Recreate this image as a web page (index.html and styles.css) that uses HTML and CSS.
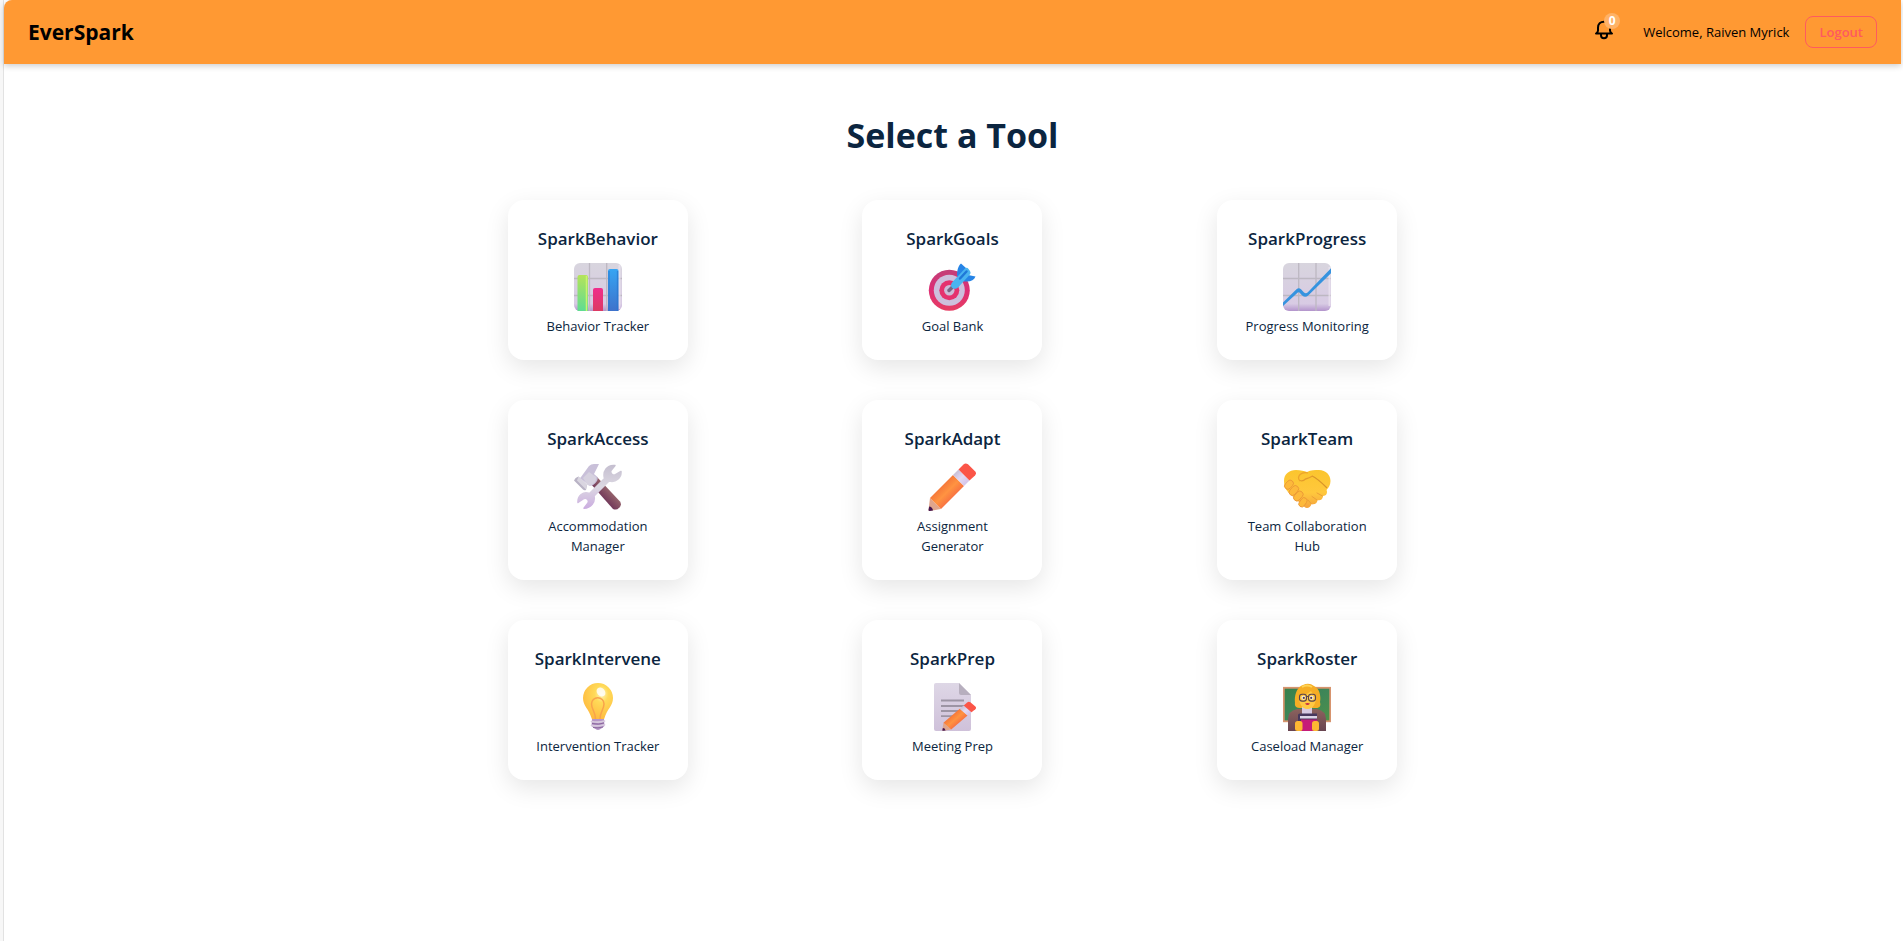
FILE: index.html
```
<!DOCTYPE html>
<html lang="en">
<head>
  <meta charset="UTF-8">
  <meta name="viewport" content="width=device-width, initial-scale=1.0">
  <title>EverSpark</title>
  <link rel="stylesheet" href="styles.css">
</head>
<body>
  <div class="page">
    <header class="navbar">
      <div class="logo">EverSpark</div>
      <div class="nav-right">
        <button class="bell" type="button" aria-label="Notifications">
          <svg viewBox="0 0 24 24" fill="none" stroke="currentColor" stroke-width="2" stroke-linecap="round" stroke-linejoin="round">
            <path d="M4 16.500h16M4.500 16.300Q6 15 6 13.500V10.700C6 7 8.500 4.700 12 4.700s6 2.300 6 6V13.500Q18 15 19.500 16.300M9 17v1.300a3 3 0 0 0 6 0V17"/>
          </svg>
          <span class="badge">0</span>
        </button>
        <span class="welcome">Welcome, Raiven Myrick</span>
        <button class="logout" type="button">Logout</button>
      </div>
    </header>

    <main class="content">
      <h1>Select a Tool</h1>
      <div class="tool-grid">

        <a class="card" href="#behavior">
          <h2>SparkBehavior</h2>
          <svg class="icon" viewBox="0 0 48 48">
            <defs>
              <linearGradient id="paper" x1="0" y1="0" x2="0" y2="1"><stop offset="0" stop-color="#d8d5de"/><stop offset=".85" stop-color="#d8cbe4"/><stop offset="1" stop-color="#b394cc"/></linearGradient>
              <linearGradient id="green" x1="0" y1="0" x2="0" y2="1"><stop offset="0" stop-color="#b4e35a"/><stop offset="1" stop-color="#5fdc92"/></linearGradient>
              <linearGradient id="pink" x1="0" y1="0" x2="0" y2="1"><stop offset="0" stop-color="#ef2d8c"/><stop offset="1" stop-color="#dc3a62"/></linearGradient>
              <linearGradient id="blue" x1="0" y1="0" x2="0" y2="1"><stop offset="0" stop-color="#36a5f3"/><stop offset="1" stop-color="#3f72cb"/></linearGradient>
            </defs>
            <rect width="48" height="48" rx="6" fill="url(#paper)"/>
            <path d="M15.500 0v48M32.700 0v48M0 15.500h48M0 32.500h48" stroke="#bdb8c2" stroke-width="1.300"/>
            <path d="M45.500 2v44" stroke="#eee6f2" stroke-width="2" opacity=".7"/>
            <path d="M3.500 48V14a2 2 0 0 1 2-2H12a2 2 0 0 1 2 2v34z" fill="url(#green)"/>
            <path d="M12.500 13v35" stroke="#cbf36d" stroke-width="1.500"/>
            <path d="M19 48V27a2 2 0 0 1 2-2h6a2 2 0 0 1 2 2v21z" fill="url(#pink)"/>
            <path d="M34 48V8a2 2 0 0 1 2-2h6.500a2 2 0 0 1 2 2v40z" fill="url(#blue)"/>
            <path d="M35 8v40M43.500 8v40" stroke="#2877cf" stroke-width="1.200" opacity=".7"/>
          </svg>
          <p>Behavior Tracker</p>
        </a>

        <a class="card" href="#goals">
          <h2>SparkGoals</h2>
          <svg class="icon" viewBox="0 0 48 48">
            <defs>
              <linearGradient id="ring" x1="0" y1="0" x2="0" y2="1"><stop offset="0" stop-color="#c23f78"/><stop offset=".5" stop-color="#dd2f75"/><stop offset="1" stop-color="#e63c62"/></linearGradient>
            </defs>
            <circle cx="21.300" cy="27.300" r="20.500" fill="url(#ring)"/>
            <circle cx="21.300" cy="27.300" r="15.500" fill="#cdbfdc"/>
            <circle cx="21.300" cy="27.300" r="10" fill="#e5326e"/>
            <circle cx="21.300" cy="27.300" r="5.200" fill="#cbbcd8"/>
            <path d="M21 27.500l5-5" stroke="#786582" stroke-width="3.500" stroke-linecap="round"/>
            <path d="M29 13c0-5 1-10 4-12.500l5 4.500-2 10zM33 18l7-6 7.500 1.500c-1.500 4-5 5.500-10.500 5z" fill="#2684e6"/>
            <path d="M24 19.500L37 5.500q2-1.500 3.500.5l1.500 2q1.500 2-.5 4L30 24.500c-2 2-5.500 1.500-6.500-.5-.8-1.500-.5-3 .5-4.500z" fill="#4ab4f0"/>
            <path d="M32 15.500l6.500-7" stroke="#1f78d8" stroke-width="2.500" stroke-linecap="round"/>
          </svg>
          <p>Goal Bank</p>
        </a>

        <a class="card" href="#progress">
          <h2>SparkProgress</h2>
          <svg class="icon" viewBox="0 0 48 48">
            <rect width="48" height="48" rx="6" fill="url(#paper)"/>
            <path d="M15.700 0v48M33 0v48M0 15.500h48M0 32.500h48" stroke="#bdb8c2" stroke-width="1.300"/>
            <path d="M46.500 4v39" stroke="#eee6f2" stroke-width="2" opacity=".7"/>
            <path d="M0 39.500L13.500 26.200q2.300-2 4.500 0l3 3.200q1.800 1.500 3.600 0L48 5.300v5L25.200 32.600q-3 2.500-6 0l-2.800-3q-.8-.8-1.600 0L0 43z" fill="#3693df"/>
          </svg>
          <p>Progress Monitoring</p>
        </a>

        <a class="card" href="#access">
          <h2>SparkAccess</h2>
          <svg class="icon" viewBox="0 0 48 48">
            <defs>
              <linearGradient id="handle" x1="1" y1="0" x2="0" y2="1"><stop offset=".3" stop-color="#a07172"/><stop offset=".7" stop-color="#672b54"/></linearGradient>
              <linearGradient id="steel" x1="0" y1="0" x2="0" y2="1"><stop offset="0" stop-color="#c5bfd0"/><stop offset=".5" stop-color="#dcd8e2"/><stop offset="1" stop-color="#cbaee0"/></linearGradient>
            </defs>
            <path d="M16 20l7-6 23 24.500q2 3-.5 6t-6.500 1.500z" fill="url(#handle)"/>
            <path d="M7 14L15 3q2-2 5-2h5l-5 10 3.500 3q1 3-2.500 6.500-3 3-6 2L6 15z" fill="#c9c0d9"/>
            <path d="M9 15l6-6 7 5q.5 4-2.500 6.500-3 2.500-6 1.500z" fill="#d6d1df"/>
            <path d="M0 17.500q1-3 4.500-4l8.500 8.500-1 5q-2 .8-3-.5z" fill="#b9b3c5"/>
            <path d="M4.500 13.500L13 22l-1 4.500-9-9z" fill="#d9d5e0"/>
            <path d="M30.500 15.500C28.500 8.500 33 1.500 41 2.500L37 7.500q-.8 2 .7 3.500T41 12l6-3.500c.5 6-5 11.500-12 9.500L20 33c1.500 6-3 12-10 12.200L14 40q1-2-.4-3.600-1.600-1.700-3.600-.9L4 39.500c-.5-6.500 5-11.500 11.500-9z" fill="url(#steel)" stroke="url(#steel)" stroke-width="1.500" stroke-linejoin="round"/>
          </svg>
          <p>Accommodation Manager</p>
        </a>

        <a class="card" href="#adapt">
          <h2>SparkAdapt</h2>
          <svg class="icon" viewBox="0 0 48 48">
            <defs>
              <linearGradient id="wood" x1="0" y1="0" x2="1" y2="1"><stop offset=".25" stop-color="#f16b36"/><stop offset=".5" stop-color="#ff9341"/><stop offset=".75" stop-color="#f56342"/></linearGradient>
              <linearGradient id="band" x1="0" y1="0" x2="1" y2="1"><stop offset="0" stop-color="#bcb3c6"/><stop offset=".5" stop-color="#e3d9f4"/><stop offset="1" stop-color="#cdbbe4"/></linearGradient>
            </defs>
            <g id="pencil">
              <path d="M2 35l11 11-11.500 2q-1 0-1-1z" fill="#dfa58d"/>
              <path d="M1.200 43.500q3 0 3.800 4l-3.500.5q-1 0-1-1z" fill="#431650"/>
              <path d="M25 12L36 23 13 46 2 35z" fill="url(#wood)"/>
              <path d="M30.500 6.500L41.500 17.500 36 23 25 12z" fill="url(#band)"/>
              <path d="M30.500 6.500l5-5q2-2 4.500-.2l7 7q2 2 0 4.200l-5.500 5z" fill="#fb5548"/>
            </g>
          </svg>
          <p>Assignment Generator</p>
        </a>

        <a class="card" href="#team">
          <h2>SparkTeam</h2>
          <svg class="icon" viewBox="0 0 48 48">
            <defs>
              <linearGradient id="skin" x1="0" y1="0" x2="0" y2="1"><stop offset="0" stop-color="#fbc52e"/><stop offset=".6" stop-color="#ffc83d"/><stop offset="1" stop-color="#f5a33d"/></linearGradient>
            </defs>
            <path d="M1 18C1 11 6 7 13 7c5 0 8 1 11 2 4-2 8-2 12-2 7 0 11.500 5 11.500 11 0 4-2 7-4 9 1.500 3-.5 6-3.500 6 0 3.500-3 5-5.500 4 0 3.500-3.500 5-6 4-1 4-5 5-7 3L5 29C2 26 1 22 1 18z" fill="url(#skin)"/>
            <path d="M29 13q5 2 15 12" fill="none" stroke="#d9942a" stroke-width="1.200"/>
            <path d="M17 18q-3-3 0-6.500 3-2.500 8-1.500" fill="none" stroke="#eda32a" stroke-width="1.200"/>
            <path d="M17 17.500q3 1 5.500-1.500 4-1 7-3" fill="none" stroke="#e49c2c" stroke-width="1.300"/>
            <path d="M34 30l5.500 3M29 33.500l5 3.500M25 37l3.500 4" stroke="#eba038" stroke-width="1" stroke-linecap="round"/>
            <g stroke="#e99435" stroke-width=".8" fill="#fdb93b">
              <rect x="-3.500" y="-4.500" width="6.500" height="10" rx="3.200" transform="translate(6.500 21.500) rotate(42)"/>
              <rect x="-3" y="-5" width="6.500" height="11" rx="3.200" transform="translate(11 27) rotate(42)"/>
              <rect x="-3" y="-5" width="6.500" height="11" rx="3.200" transform="translate(15.500 32.500) rotate(42)"/>
              <rect x="-3" y="-4" width="6" height="10" rx="3" transform="translate(20.500 38.500) rotate(35)"/>
            </g>
          </svg>
          <p>Team Collaboration Hub</p>
        </a>

        <a class="card" href="#intervene">
          <h2>SparkIntervene</h2>
          <svg class="icon" viewBox="0 0 48 48">
            <defs>
              <radialGradient id="glass" cx=".62" cy=".3" r=".75"><stop offset="0" stop-color="#fff6bd"/><stop offset=".3" stop-color="#ffda58"/><stop offset="1" stop-color="#ffb73d"/></radialGradient>
            </defs>
            <path d="M9 15a15 15 0 0 1 30 0c0 8-6 11-8.500 20q-.3 2-2 2h-9q-1.700 0-2-2C15 26 9 23 9 15z" fill="url(#glass)"/>
            <ellipse cx="27" cy="9" rx="4" ry="5" transform="rotate(-40 27 9)" fill="#fff" opacity=".8"/>
            <path d="M21.500 36c0-7-4-10-4-15a6.200 6.200 0 0 1 12.500 0c0 5-4 8-4 15" fill="none" stroke="#f9a34c" stroke-width="1.500"/>
            <path d="M18 36h12l.5 7q-2 2-4 3-2.500 2-5 0-2-1-4-3z" fill="#b596c7"/>
            <path d="M17.500 38.500q7 1.500 13-.5M17.500 42.300q7 1.500 13-.5" fill="none" stroke="#d8cade" stroke-width="1.700" stroke-linecap="round"/>
            <path d="M18 40.500q7 1.500 12-.5M19 44.500q5 1 10-.5" fill="none" stroke="#866397" stroke-width=".9"/>
          </svg>
          <p>Intervention Tracker</p>
        </a>

        <a class="card" href="#prep">
          <h2>SparkPrep</h2>
          <svg class="icon" viewBox="0 0 48 48">
            <defs>
              <linearGradient id="sheet" x1="0" y1="0" x2="0" y2="1"><stop offset="0" stop-color="#ded7e6"/><stop offset="1" stop-color="#cfc1da"/></linearGradient>
            </defs>
            <path d="M8 0h23l12 12v34q0 2-2 2H8q-2 0-2-2V2q0-2 2-2z" fill="url(#sheet)"/>
            <path d="M31 0l12 12H33q-2 0-2-2z" fill="#b7afbe"/>
            <path d="M13 17.500h23M13 23h23M13 28h20M13 33.200h15" stroke="#9c94a4" stroke-width="1.800"/>
            <use href="#pencil" transform="translate(14 18.500) scale(.71 .61)"/>
          </svg>
          <p>Meeting Prep</p>
        </a>

        <a class="card" href="#roster">
          <h2>SparkRoster</h2>
          <svg class="icon" viewBox="0 0 48 48">
            <defs>
              <linearGradient id="board" x1="0" y1="0" x2="1" y2="1"><stop offset="0" stop-color="#36804b"/><stop offset=".5" stop-color="#3e8658"/><stop offset="1" stop-color="#4f9148"/></linearGradient>
              <linearGradient id="coat" x1="0" y1="0" x2="0" y2="1"><stop offset="0" stop-color="#8b625d"/><stop offset="1" stop-color="#694551"/></linearGradient>
            </defs>
            <rect x=".8" y="4.800" width="46.400" height="33.500" fill="url(#board)" stroke="#d7946e" stroke-width="1.800"/>
            <path d="M5 48V36q0-8 9-10h20q9 2 9 10v12z" fill="url(#coat)"/>
            <path d="M12 20C11 12 14 4 20 2q6-3 11 1c6 3 7 10 6 16 1 4 0 6-5 6H17q-6 0-5-5z" fill="#f5ad25"/>
            <path d="M19 24h10v8H19z" fill="#d5c9e1"/>
            <path d="M16 13q8-1 12-5 2 4 5 5c0 8-3 13-8.500 13S16 21 16 13z" fill="#ffc943"/>
            <path d="M19 4q5-3 10 0" stroke="#ffd353" stroke-width="2" fill="none"/>
            <circle cx="20.500" cy="14.700" r="2" fill="#f3eee7"/>
            <circle cx="28.500" cy="14.700" r="2" fill="#f3eee7"/>
            <circle cx="20.800" cy="14.900" r="1.100" fill="#573d4c"/>
            <circle cx="28.200" cy="14.900" r="1.100" fill="#573d4c"/>
            <rect x="16.500" y="11.300" width="7" height="6.800" rx="2.600" fill="none" stroke="#59424f" stroke-width="1.100"/>
            <rect x="25.500" y="11.300" width="7" height="6.800" rx="2.600" fill="none" stroke="#59424f" stroke-width="1.100"/>
            <path d="M23.500 13.500h2" stroke="#59424f"/>
            <path d="M22 20.500q2.500-.8 5 0-2.500 3-5 0z" fill="#c52d45"/>
            <path d="M15 32q0-1.500 2-1.500h17V38H15z" fill="#46385d"/>
            <path d="M17 33h17v2.500H17z" fill="#dbd4e6"/>
            <path d="M18 36.500h16V48H18z" fill="#c61c78"/>
            <rect x="12" y="38" width="7.500" height="10" rx="2.500" fill="#fdb832"/>
            <rect x="29" y="38" width="7" height="10" rx="2.500" fill="#fdb832"/>
          </svg>
          <p>Caseload Manager</p>
        </a>

      </div>
    </main>
  </div>
</body>
</html>
```

FILE: styles.css
```
*{ margin: 0; padding: 0; box-sizing: border-box; }
body{
  font-family: "Open Sans", "Noto Sans", sans-serif;
  font-size: 13px;
  color: #0b2540;
  background: #fff;
}
button{ font: inherit; background: none; border: none; cursor: pointer; }
a{ color: inherit; text-decoration: none; }

.page{
  min-height: 100vh;
  margin-right: 2px;
  border-left: 3px solid #f7f7f7;
  box-shadow: inset 1px 0 #e2e2e2;
  padding-left: 1px;
}

.navbar{
  display: flex;
  justify-content: space-between;
  align-items: center;
  height: 64px;
  padding: 0 24px;
  color: #000;
  background: #ff9933;
  border-top-left-radius: 8px;
  box-shadow: 0 2px 6px rgba(0, 0, 0, 0.2);
}
.logo{ font-size: 21px; font-weight: 700; }
.nav-right{ display: flex; align-items: center; }

.bell{
  position: relative;
  height: 30px;
  margin-right: 27px;
  color: #000;
}
.bell svg{ display: block; width: 24px; height: 24px; margin-bottom: 6px; }
.badge{
  position: absolute;
  top: -4px;
  right: -4px;
  width: 16px;
  height: 16px;
  border-radius: 50%;
  background: #ffb266;
  color: #fff;
  font-size: 12px;
  font-weight: 700;
  line-height: 16px;
  text-align: center;
}
.welcome{ margin-right: 16px; }
.logout{
  height: 32px;
  padding: 0 13px;
  border: 1px solid #ff5a5f;
  border-radius: 8px;
  color: #ff5a5f;
  font-weight: 600;
}

.content{ max-width: 1024px; margin: 0 auto; padding: 48px 0; }
.content h1{
  margin-bottom: 42px;
  font-size: 34px;
  line-height: 46px;
  font-weight: 700;
  text-align: center;
}
.tool-grid{
  display: grid;
  grid-template-columns: repeat(3, 1fr);
  gap: 40px;
  justify-items: center;
}
.card{
  width: 180px;
  padding: 24px;
  border-radius: 16px;
  background: #fff;
  box-shadow: 0 8px 24px rgba(0, 0, 0, 0.1);
  display: flex;
  flex-direction: column;
  align-items: center;
  text-align: center;
}
.card h2{ font-size: 17px; line-height: 30px; font-weight: 600; }
.card p{ line-height: 20px; }
.icon{ width: 48px; height: 48px; margin: 9px 0 5px; }
```
